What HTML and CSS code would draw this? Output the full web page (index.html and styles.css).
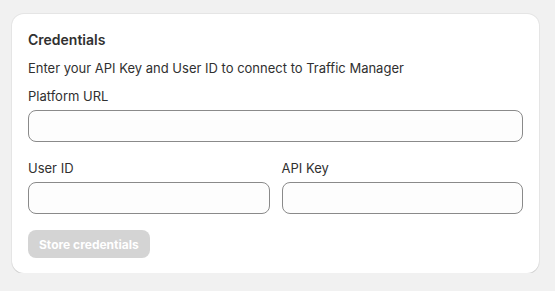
FILE: index.html
```html
<!DOCTYPE html>
<html lang="en">
<head>
    <meta charset="UTF-8">
    <meta name="viewport" content="width=device-width, initial-scale=1.0">
    <title>Credentials</title>
    <link rel="stylesheet" href="styles.css">
</head>
<body>
    <div class="page">
        <div class="card">
            <h2 class="card-title">Credentials</h2>
            <p class="card-text">Enter your API Key and User ID to connect to Traffic Manager</p>

            <div class="field">
                <label class="field-label" for="url">Platform URL</label>
                <input class="field-input" id="url" type="text">
            </div>

            <div class="field-row">
                <div class="field">
                    <label class="field-label" for="user">User ID</label>
                    <input class="field-input" id="user" type="text">
                </div>
                <div class="field">
                    <label class="field-label" for="key">API Key</label>
                    <input class="field-input" id="key" type="text">
                </div>
            </div>

            <div class="actions">
                <button class="btn" type="button" disabled>Store credentials</button>
            </div>
        </div>
    </div>
</body>
</html>
```

FILE: styles.css
```css
body {
    margin: 0;
    padding: 0;
    font-family: Inter, "Noto Sans", sans-serif;
    background-color: #f1f1f1;
    color: #303030;
    font-size: 13px;
    line-height: 20px;
}

.page {
    padding: 14px 16px 0 12px;
}

.card {
    background-color: #fff;
    border-radius: 12px;
    padding: 16px 16px 15px;
    box-shadow: 0 1px 0 0 rgba(26, 26, 26, 0.1), 0 0 0 1px rgba(26, 26, 26, 0.05);
}

.card-title {
    margin: 0 0 8px;
    font-size: 14px;
    font-weight: 600;
    line-height: 20px;
}

.card-text {
    margin: 0 0 8px;
}

.field {
    display: flex;
    flex-direction: column;
    flex: 1;
}

.field-label {
    margin-bottom: 4px;
}

.field-input {
    box-sizing: border-box;
    height: 32px;
    width: 100%;
    margin: 0;
    border: 1px solid #8a8a8a;
    border-radius: 8px;
    background-color: #fdfdfd;
    font: inherit;
    padding: 0 12px;
}

.field-row {
    display: flex;
    gap: 12px;
    margin-top: 16px;
}

.actions {
    margin-top: 16px;
}

.btn {
    height: 28px;
    padding: 0 11px;
    border: none;
    border-radius: 8px;
    background-color: #d4d4d4;
    color: #fff;
    font-family: inherit;
    font-size: 12px;
    font-weight: 650;
}
```
